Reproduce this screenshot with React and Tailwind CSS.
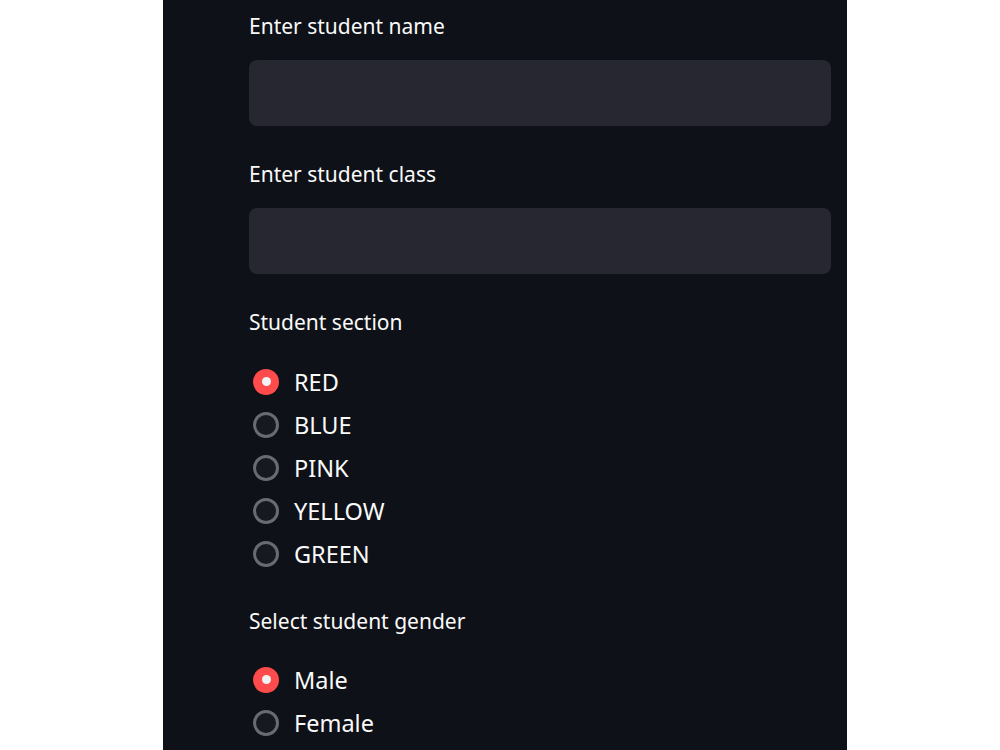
import React from "react";

const SECTIONS = ["RED", "BLUE", "PINK", "YELLOW", "GREEN"];
const GENDERS = ["Male", "Female"];

function Radio({ label, selected }) {
  return (
    <div className="flex items-center h-[43px]">
      {selected ? (
        <span className="ml-[4px] w-[26px] h-[26px] rounded-full bg-[#ff4b4b] flex items-center justify-center">
          <span className="w-[9px] h-[9px] rounded-full bg-[#f0f2f6]" />
        </span>
      ) : (
        <span className="ml-[4px] w-[26px] h-[26px] rounded-full border-[3px] border-[#696b71] bg-[#161920]" />
      )}
      <span className="ml-[15px] text-[23.5px] leading-[28px] text-[#fafafa]">{label}</span>
    </div>
  );
}

function Label({ children, className = "" }) {
  return <div className={"h-[24px] leading-[24px] text-[21px] text-[#fafafa] " + className}>{children}</div>;
}

export default function App() {
  return (
    <div className="w-[1000px] h-[750px] bg-white overflow-hidden" style={{ fontFamily: "'Noto Sans', sans-serif" }}>
      <div className="ml-[163px] w-[684px] h-[750px] bg-[#0e1117] pl-[86px] pr-[16px] pt-[14px]">
        <Label>Enter student name</Label>
        <div className="mt-[22px] h-[66px] rounded-[8px] bg-[#262730]" />

        <Label className="mt-[36px]">Enter student class</Label>
        <div className="mt-[22px] h-[66px] rounded-[8px] bg-[#262730]" />

        <Label className="mt-[36px]">Student section</Label>
        <div className="mt-[26px]">
          {SECTIONS.map((s, i) => (
            <Radio key={s} label={s} selected={i === 0} />
          ))}
        </div>

        <Label className="mt-[34px]">Select student gender</Label>
        <div className="mt-[25px]">
          {GENDERS.map((g, i) => (
            <Radio key={g} label={g} selected={i === 0} />
          ))}
        </div>
      </div>
    </div>
  );
}
